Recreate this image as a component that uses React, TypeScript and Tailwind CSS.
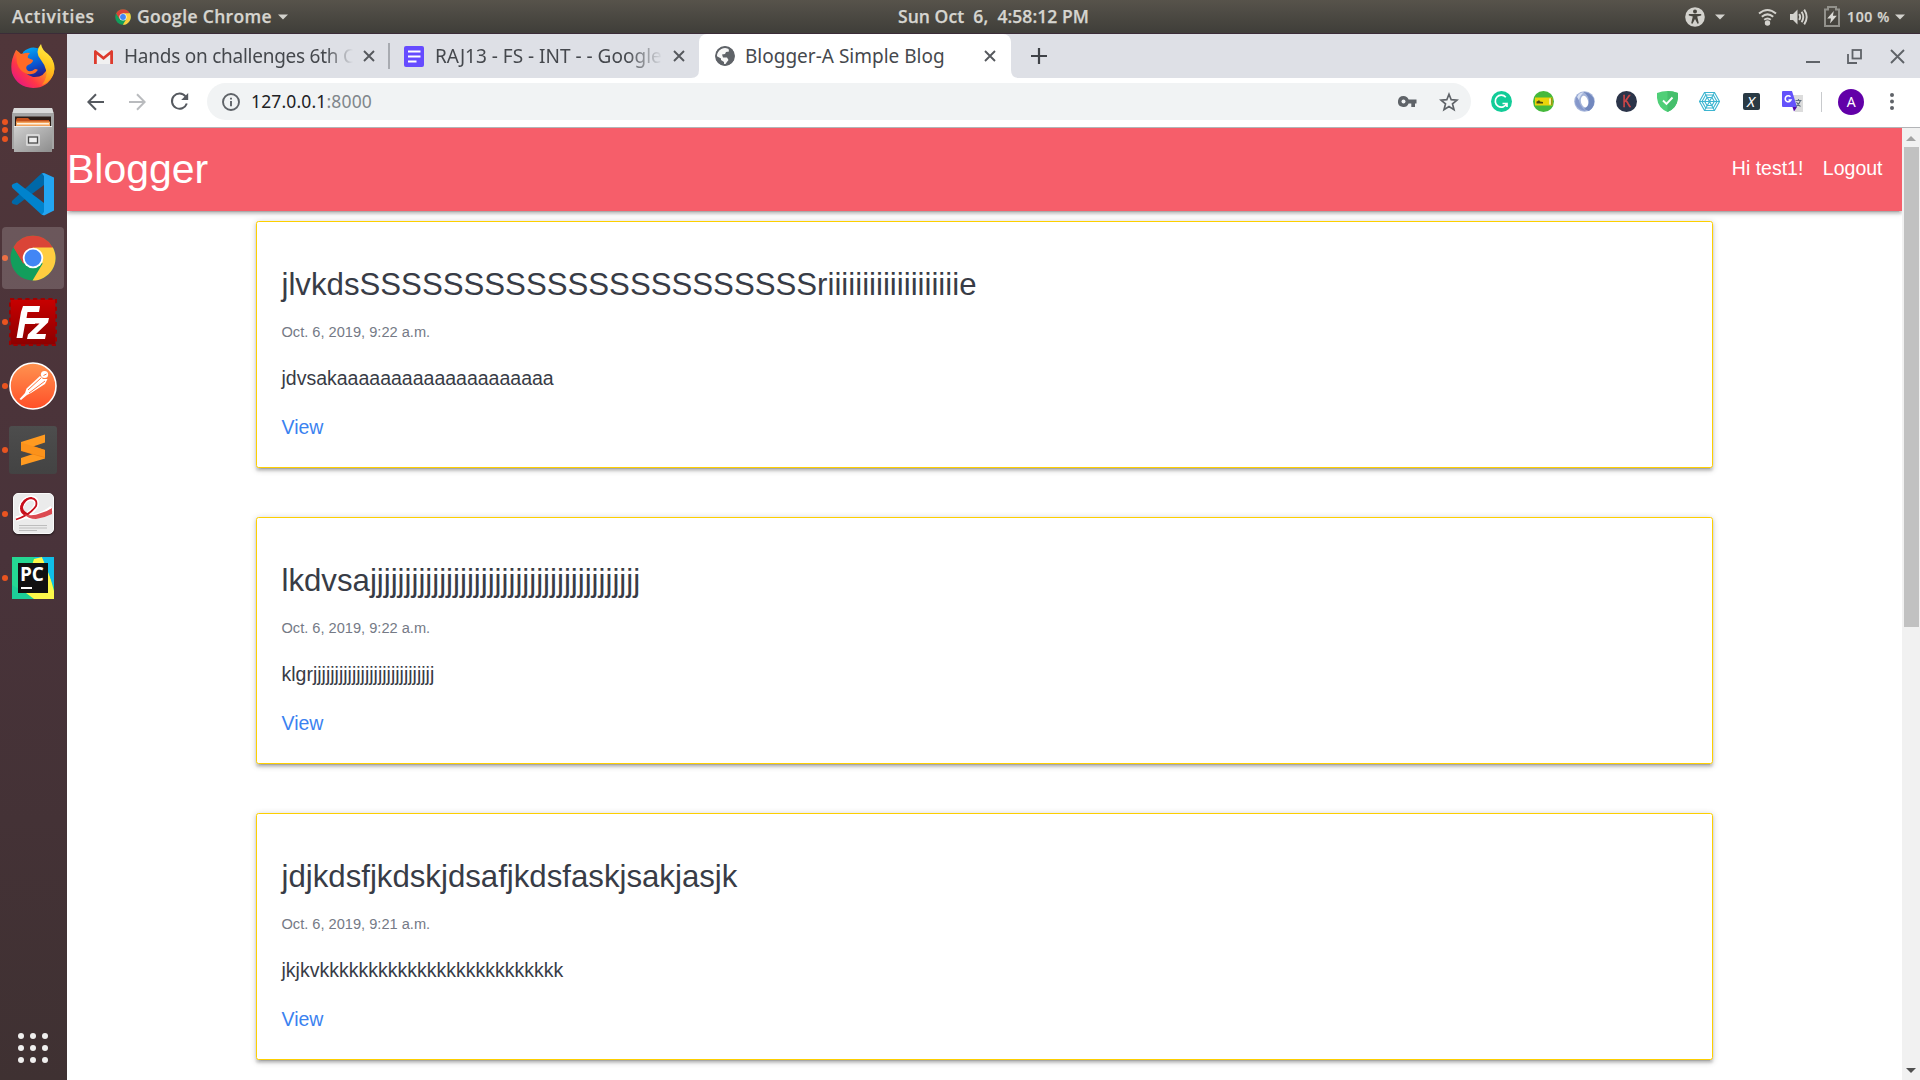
import React from "react";

type Post = { title: string; date: string; body: string };

const posts: Post[] = [
  {
    title: "jlvkds" + "S".repeat(22) + "r" + "i".repeat(19) + "e",
    date: "Oct. 6, 2019, 9:22 a.m.",
    body: "jdvsak" + "a".repeat(20),
  },
  { title: "lkdvsa" + "j".repeat(39), date: "Oct. 6, 2019, 9:22 a.m.", body: "klgr" + "j".repeat(28) },
  { title: "jdjkdsfjkdskjdsafjkdsfaskjsakjasjk", date: "Oct. 6, 2019, 9:21 a.m.", body: "jkjkv" + "k".repeat(25) },
];

function ChromeLogo({ size }: { size: number }) {
  return (
    <svg width={size} height={size} viewBox="0 0 48 48" className="shrink-0">
      <circle cx="24" cy="24" r="23.5" fill="#129e5c" />
      <path d="M3.6 12.4A23.5 23.5 0 0 1 44.4 12.4L44.6 13.5H24L13.8 29.5Z" fill="#da4437" />
      <path d="M24 13H44.8A23.5 23.5 0 0 1 23.5 47.5L34 30Z" fill="#ffcd40" />
      <path d="M3.6 12.4L14 30L20 20Z" fill="#da4437" />
      <circle cx="24" cy="24" r="10.7" fill="#fff" />
      <circle cx="24" cy="24" r="8.8" fill="#4286f5" />
    </svg>
  );
}

function Caret() {
  return (
    <svg width="10" height="6" viewBox="0 0 10 6" className="shrink-0">
      <path d="M0 .5H10L5 5.5Z" fill="#d3d2cd" />
    </svg>
  );
}

function TopBar() {
  return (
    <header className="flex h-[34px] shrink-0 items-center border-b border-[#3b2c38] bg-linear-to-b from-[#57534b] to-[#3f3e39] pl-3 font-['Open_Sans',sans-serif] text-[17.5px] font-semibold text-[#d6d5d0] [-webkit-text-stroke:0.25px_#d6d5d0]">
      <div className="w-[103px] whitespace-nowrap tracking-[0.6px]">Activities</div>
      <ChromeLogo size={16} />
      <div className="ml-[6px] w-[136px] whitespace-nowrap tracking-[0.35px]">Google Chrome</div>
      <span className="ml-[5px]">
        <Caret />
      </span>
      <div className="ml-[610px] w-[192px] whitespace-pre tracking-[0.05px]">Sun Oct  6,  4:58:12 PM</div>
      <div className="ml-auto flex items-center pr-[15px]">
        <svg width="20" height="20" viewBox="0 0 20 20">
          <circle cx="10" cy="10" r="9.8" fill="#d3d2cd" />
          <circle cx="10" cy="4.6" r="2" fill="#48463f" />
          <path d="M3.8 7.1H16.2V8.6L12.2 9.4L13.8 16.3L12.5 16.8L10 12L7.5 16.8L6.2 16.3L7.8 9.4L3.8 8.6Z" fill="#48463f" />
        </svg>
        <span className="ml-[10px]">
          <Caret />
        </span>
        <svg width="19" height="18" viewBox="0 0 19 18" className="ml-[33px]" fill="none" stroke="#d3d2cd" strokeWidth="2">
          <path d="M1 5.6Q9.5-1.6 18 5.6" />
          <path d="M3.8 8.8Q9.5 4 15.2 8.8" />
          <path d="M6.2 11.8Q9.5 9.2 12.8 11.8" />
          <circle cx="9.5" cy="15" r="1.7" fill="#d3d2cd" />
        </svg>
        <svg width="20" height="20" viewBox="0 0 20 20" className="ml-[12px]" fill="none" stroke="#d3d2cd" strokeWidth="1.9">
          <path d="M1 7H4L8.5 2.5V17.5L4 13H1Z" fill="#d3d2cd" stroke="none" />
          <path d="M10.2 7Q12.2 10 10.2 13" />
          <path d="M12.6 4.8Q16 10 12.6 15.2" />
          <path d="M15.2 2.6Q20.2 10 15.2 17.4" />
        </svg>
        <svg width="16" height="21" viewBox="0 0 16 21" className="ml-[15px]">
          <path d="M1 3.5H4V1H12V3.5H15V20H1Z" fill="none" stroke="#92918b" strokeWidth="2" />
          <path d="M9.8 5L3.2 12.5H7L6 17.5L12.8 9.8H8.9Z" fill="#dcdbd6" />
        </svg>
        <div className="ml-[7px] w-[44px] whitespace-nowrap text-[14px] tracking-[0.65px]">100 %</div>
        <span className="ml-[4px]">
          <Caret />
        </span>
      </div>
    </header>
  );
}

function Firefox() {
  return (
    <svg width="46" height="46" viewBox="0 0 46 46">
      <defs>
        <linearGradient id="ff1" x1="1" y1="0.1" x2="0.1" y2="0.9">
          <stop offset="0" stopColor="#ffe83a" />
          <stop offset=".35" stopColor="#ff9a1c" />
          <stop offset=".7" stopColor="#ff3647" />
          <stop offset="1" stopColor="#e31587" />
        </linearGradient>
        <linearGradient id="ff2" x1=".3" y1="0" x2=".6" y2="1">
          <stop offset="0" stopColor="#00a5f5" />
          <stop offset=".6" stopColor="#0a52cf" />
          <stop offset="1" stopColor="#2b1a80" />
        </linearGradient>
        <linearGradient id="ff3" x1=".6" y1="0" x2=".4" y2="1">
          <stop offset="0" stopColor="#fff04a" />
          <stop offset=".5" stopColor="#ffc81e" />
          <stop offset="1" stopColor="#ff8a1c" />
        </linearGradient>
      </defs>
      <path d="M6 7Q9 9 11 11Q17 8 26 9L40 13Q46 22 43.5 31Q38 45 23 45Q7 44 2 30Q-.5 19 6 7Z" fill="url(#ff1)" />
      <path d="M13 9Q22 1 32 7Q38 13 38 24Q34 35 23 34Q12 31 12 20Z" fill="url(#ff2)" />
      <path d="M6 7Q9 10 11 12Q15 9 20 10Q17 13 18 15L23 17Q23 20 18 22Q15 24 17 27Q20 30 25 26Q29 26 27 28Q24 32 17 31Q9 28 7 20Z" fill="#ff6a25" />
      <path d="M31 1Q32 7 38 11Q45 18 44.5 26Q43 38 32 42Q38 34 36 27Q35 22 31 17Q24 9 31 1Z" fill="url(#ff3)" />
    </svg>
  );
}

function Files() {
  return (
    <svg width="44" height="46" viewBox="0 0 44 46">
      <defs>
        <linearGradient id="fl" x1="0" y1="0" x2="1" y2="1">
          <stop offset="0" stopColor="#cfcfcf" />
          <stop offset="1" stopColor="#8d8d8d" />
        </linearGradient>
      </defs>
      <path d="M3 1H41L43 7V42H1V7Z" fill="#a5a5a5" />
      <path d="M3 1H41L42.5 6H1.5Z" fill="#dadada" />
      <rect x="4" y="9.500" width="36" height="12" fill="#2c1d18" />
      <path d="M6 11H17L19 13H38V20H5V13Z" fill="#c4501b" />
      <path d="M5 14.500H39V20H5Z" fill="#f3a35c" />
      <path d="M6 16H38V17.500H6Z" fill="#fff0dd" />
      <path d="M3 19H41V45H3Z" fill="url(#fl)" />
      <path d="M3 19H41V20H3Z" fill="#ececec" />
      <rect x="15" y="27" width="14" height="12" rx="1.500" fill="#d8d8d8" />
      <rect x="17.500" y="30" width="9" height="6" fill="#eee" stroke="#4c4c4c" strokeWidth="1.300" />
    </svg>
  );
}

function VSCode() {
  return (
    <svg width="44" height="44" viewBox="0 0 44 44">
      <path d="M1 29Q0 31 2 32L6 33L33 13V1L31 1L2 28Z" fill="#0068a8" />
      <path d="M1 15Q0 13 2 12L6 10.500L33 31V43L31 43L1.500 16Z" fill="#0083cd" />
      <path d="M33 1L43 5.500V38.500L33 43.500L31 42.500L33 40V4L31 1.500Z" fill="#23a5f2" />
    </svg>
  );
}

function FileZilla() {
  return (
    <svg width="48" height="48" viewBox="0 0 48 48">
      <defs>
        <linearGradient id="fz" x1="0" y1="0" x2="0" y2="1">
          <stop offset="0" stopColor="#c80000" />
          <stop offset="1" stopColor="#8c0000" />
        </linearGradient>
      </defs>
      <rect x="1.500" y="1.500" width="45" height="45" fill="url(#fz)" />
      <rect x="1" y="1" width="46" height="46" fill="none" stroke="#a00000" strokeWidth="2" strokeDasharray="4.200 3.467" />
      <path d="M14 8H31L30 14H18.500L17.500 20H27L26 26H16L13.500 40H7.500L12 14Z" fill="#fff" />
      <path d="M24 20H40L39 24.500L27 36H37L36 41H18L19 36.500L30.500 25.500H23Z" fill="#fff" />
    </svg>
  );
}

function Postman() {
  return (
    <svg width="48" height="48" viewBox="0 0 48 48">
      <defs>
        <linearGradient id="pm" x1="0" y1="0" x2="0" y2="1">
          <stop offset="0" stopColor="#ff9350" />
          <stop offset="1" stopColor="#ff4f28" />
        </linearGradient>
      </defs>
      <circle cx="24" cy="24" r="23" fill="url(#pm)" stroke="#fff" strokeWidth="1.600" />
      <circle cx="35.500" cy="12.500" r="3.600" fill="#fff" />
      <path d="M31 14L34 17L38.500 17L36 22L22 31L18 33L12 38L10.500 37L16 31L17.500 26.500Z" fill="#fff" />
      <path d="M19 28L32 16M20 31L36 19M34.500 13.500L37.500 12" stroke="#ff7540" strokeWidth="1" />
    </svg>
  );
}

function Sublime() {
  return (
    <div className="flex h-12 w-12 items-center justify-center rounded-[3px] bg-linear-to-b from-[#4d4d4d] to-[#434343]">
      <svg width="26" height="32" viewBox="0 0 26 32">
        <path d="M1 24L25 16V24.500L1 31.500Z" fill="#ff9a20" />
        <path d="M1 8L25 16V24L1 17Z" fill="#f08311" />
        <path d="M1 8L25 .500V8.500L1 16.500Z" fill="#ff9a20" />
        <path d="M1 8.500L25 16V23L13 20L1 16.500Z" fill="#fb921b" />
      </svg>
    </div>
  );
}

function Evince() {
  return (
    <div className="mb-[2px] h-[41px] w-[41px] overflow-hidden rounded-[5px] border border-[#fafafa] bg-[#ebebeb] shadow-[0_1px_2px_rgba(0,0,0,0.6)]">
      <svg width="39" height="39" viewBox="0 0 39 39" fill="none">
        <path d="M2 25Q16 22 22 12Q24 5 17 4Q9 5 7 14Q7 22 16 23Q28 22 38 14" stroke="#fff" strokeWidth="5" />
        <path d="M2 25.500Q16 21 22 12Q24 5 17 4Q9 5 7 13" stroke="#c8101c" strokeWidth="1.800" />
        <path d="M18 3Q8 4 6 14Q6 20 12 22L16 20Q9 18 9 13Q11 6 18 4Z" fill="#c8101c" />
        <path d="M10 20Q18 23 27 19Q34 17 38 14V20Q30 24 22 25Q14 25 10 20Z" fill="#dc4a50" />
        <path d="M5 31.500H33M5 34H33M5 36.500H23" stroke="#bdbdbd" strokeWidth="1" />
      </svg>
    </div>
  );
}

function PyCharm() {
  return (
    <div className="relative h-[42px] w-[42px]">
      <svg width="42" height="42" viewBox="0 0 42 42">
        <rect width="42" height="42" fill="#21d789" />
        <path d="M22 0H42V30L30 6Z" fill="#07c3f2" />
        <path d="M22 2L30 0L36 12L42 34V42H18L0 38L12 32Z" fill="#fcf84a" />
        <path d="M0 0H22L6 32L0 30Z" fill="#25d793" />
        <path d="M0 28L14 36L22 42H0Z" fill="#1ccf98" />
        <path d="M30 0H42V30Z" fill="#10bfe8" />
        <rect x="6" y="6" width="30" height="30" fill="#111" />
        <rect x="9" y="30" width="11" height="2" fill="#fff" />
      </svg>
      <span className="absolute left-[8px] top-[6px] font-['Open_Sans',sans-serif] text-[19px] font-bold leading-[22px] tracking-[-0.2px] text-white">PC</span>
    </div>
  );
}

const dock: { name: string; icon: React.ReactNode; dots: number; active?: boolean }[] = [
  { name: "firefox", icon: <Firefox />, dots: 0 },
  { name: "files", icon: <Files />, dots: 3 },
  { name: "code", icon: <VSCode />, dots: 0 },
  { name: "chrome", icon: <ChromeLogo size={46} />, dots: 1, active: true },
  { name: "filezilla", icon: <FileZilla />, dots: 1 },
  { name: "postman", icon: <Postman />, dots: 1 },
  { name: "sublime", icon: <Sublime />, dots: 1 },
  { name: "evince", icon: <Evince />, dots: 1 },
  { name: "pycharm", icon: <PyCharm />, dots: 1 },
];

function Dock() {
  return (
    <aside className="flex w-[67px] shrink-0 flex-col bg-linear-to-b from-[#50363a] via-[#49333a] to-[#3f3132]">
      {dock.map((d) => (
        <div key={d.name} className="flex h-16 items-center">
          <div className="-mr-[6px] ml-[2px] flex w-[6px] flex-col gap-[2.500px]">
            {Array.from({ length: d.dots }, (_, i) => (
              <span key={i} className="h-[6px] w-[6px] rounded-full bg-[#e95420]" />
            ))}
          </div>
          <div
            className={
              d.active
                ? "flex h-[62px] w-[62px] items-center justify-center rounded-[4px] bg-white/17"
                : "flex h-[62px] w-[62px] items-center justify-center"
            }
          >
            {d.icon}
          </div>
        </div>
      ))}
      <div className="mt-auto mb-[17px] ml-[18px] grid w-[30px] grid-cols-3 gap-[6px]">
        {Array.from({ length: 9 }, (_, i) => (
          <span key={i} className="h-[6px] w-[6px] rounded-full bg-[#f0efee]" />
        ))}
      </div>
    </aside>
  );
}

function Close() {
  return (
    <svg width="12" height="12" viewBox="0 0 12 12" className="shrink-0" stroke="#55585d" strokeWidth="1.900">
      <path d="M1 1L11 11M11 1L1 11" />
    </svg>
  );
}

function TabStrip() {
  return (
    <div className="flex h-11 shrink-0 items-center bg-[#dee0e6] font-['Noto_Sans',sans-serif] text-[19px] text-[#45484d]">
      <div className="ml-[27px] flex items-center">
        <svg width="19" height="14" viewBox="0 0 19 14" className="mt-[2px] shrink-0">
          <rect x=".500" y=".500" width="18" height="13.500" rx="1" fill="#f1f1f1" />
          <path d="M0 14V1.500Q0 0 1.500 0L9.500 6.500L17.500 0Q19 0 19 1.500V14H16.200V4.500L9.500 10L2.800 4.500V14Z" fill="#dd3b2d" />
        </svg>
        <div className="ml-[11px] w-[229px] whitespace-nowrap tracking-[-0.25px] [mask-image:linear-gradient(to_right,black_88%,transparent_100%)]">
          Hands on challenges 6th C
        </div>
        <span className="ml-[10px]">
          <Close />
        </span>
      </div>
      <div className="ml-[13px] h-[26px] w-[2px] bg-[#a8abb1]" />
      <div className="ml-[14px] flex items-center">
        <svg width="20" height="21" viewBox="0 0 20 21" className="shrink-0">
          <rect width="20" height="21" rx="2" fill="#664bff" />
          <path d="M4 5.500H16.500M4 10.500H16.500M4 15.500H12.500" stroke="#fff" strokeWidth="2.200" />
        </svg>
        <div className="ml-[11px] w-[228px] whitespace-nowrap [mask-image:linear-gradient(to_right,black_84%,transparent_100%)]">
          RAJ13 - FS - INT - - Google
        </div>
        <span className="ml-[10px]">
          <Close />
        </span>
      </div>
      <div className="ml-[6px] flex h-11 w-[328px] items-end">
        <svg width="8" height="8" viewBox="0 0 8 8" className="shrink-0">
          <path d="M8 0Q8 8 0 8H8Z" fill="#fff" />
        </svg>
        <div className="flex h-11 w-[312px] items-center rounded-t-[8px] bg-white">
          <svg width="20" height="20" viewBox="0 0 20 20" className="ml-[16px] shrink-0">
            <circle cx="10" cy="10" r="9.500" fill="#5f6368" />
            <path d="M9 1.500Q2 4 1.500 10L6 12.500V14L9 16V18.500Q11 18.500 11.500 16.500L13.500 14L12 11.500H8L7 8.500L10 8L11 6L14 5.500L13.500 2.500Z" fill="#fff" opacity=".95" />
            <circle cx="10" cy="10" r="9" fill="none" stroke="#5f6368" strokeWidth="1.800" />
          </svg>
          <div className="ml-[10px] w-[239px] whitespace-nowrap">Blogger-A Simple Blog</div>
          <Close />
        </div>
        <svg width="8" height="8" viewBox="0 0 8 8" className="shrink-0">
          <path d="M0 0Q0 8 8 8H0Z" fill="#fff" />
        </svg>
      </div>
      <svg width="16" height="16" viewBox="0 0 16 16" className="ml-[12px]" stroke="#3f4247" strokeWidth="2.200">
        <path d="M8 0V16M0 8H16" />
      </svg>
      <div className="ml-auto flex items-center pr-[15px]">
        <svg width="14" height="14" viewBox="0 0 14 14" stroke="#5f6368" strokeWidth="2">
          <path d="M0 13H14" />
        </svg>
        <svg width="15" height="15" viewBox="0 0 15 15" className="ml-[27px]" fill="none" stroke="#5f6368" strokeWidth="1.800">
          <rect x="5.500" y="1" width="8.500" height="8.500" />
          <path d="M1 5V14H10" />
        </svg>
        <svg width="15" height="15" viewBox="0 0 15 15" className="ml-[28px]" stroke="#5f6368" strokeWidth="1.900">
          <path d="M1 1L14 14M14 1L1 14" />
        </svg>
      </div>
    </div>
  );
}

function Extensions() {
  return (
    <div className="ml-[20px] flex items-center gap-[20.600px]">
      <svg width="21" height="21" viewBox="0 0 21 21">
        <circle cx="10.500" cy="10.500" r="10.500" fill="#12cc98" />
        <path d="M14.800 6.200A6 6 0 1 0 15.800 12.500H11.500M16 12.500V16" fill="none" stroke="#fff" strokeWidth="1.700" />
      </svg>
      <svg width="21" height="21" viewBox="0 0 21 21">
        <circle cx="10.500" cy="10.500" r="10.500" fill="#45b93c" />
        <rect x="2" y="6.500" width="17.500" height="8" fill="#e9d40b" />
        <path d="M3.500 12.500V10.500L5 10L6 9L7 10.500L10 11V12.500Z" fill="#4b4a10" />
        <path d="M17 7.500V13.500" stroke="#fff" strokeWidth="1.200" />
        <path d="M18.800 7V14" stroke="#7b7b12" strokeWidth="1" />
      </svg>
      <svg width="21" height="21" viewBox="0 0 21 21">
        <circle cx="10.500" cy="10.500" r="10.300" fill="#a5b5da" />
        <path d="M9 1Q16 1 19.500 7Q22 15 15 20L10 18Q17 14 14 6Q12 2 9 1Z" fill="#7288be" />
        <path d="M12 20Q4 19 1.500 13Q.500 8 4 3.500Q4 14 12 20Z" fill="#8597ca" />
        <path d="M3 6Q5 1.500 10 1.200Q6 4 5 9Z" fill="#d7e0f3" />
        <ellipse cx="10.500" cy="10.500" rx="3.600" ry="5.800" transform="rotate(-12 10.500 10.500)" fill="#fff" />
      </svg>
      <div className="flex h-[21px] w-[21px] items-center justify-center rounded-full bg-[#2b3449] font-['Liberation_Sans',sans-serif] text-[17px] leading-none text-[#d34848] [-webkit-text-stroke:0.5px_#d34848]">
        <span className="scale-x-75">K</span>
      </div>
      <svg width="21" height="21" viewBox="0 0 21 21">
        <path d="M10.500 0Q16 0 21 2V7Q20 17 10.500 21Q1 17 0 7V2Q5 0 10.500 0Z" fill="#4fcf77" />
        <path d="M10.500 0Q16 0 21 2V7Q20 17 10.500 21Z" fill="#45bf6c" />
        <path d="M6 9.500L9.500 13L15.500 6.500" fill="none" stroke="#fff" strokeWidth="1.900" />
      </svg>
      <svg width="21" height="21" viewBox="0 0 21 21" fill="none" stroke="#3db5d0" strokeWidth="1.100">
        <path d="M5.500 1.500H15.500L20.500 10.500L15.500 19.500H5.500L.500 10.500Z" />
        <path d="M6.700 4H14.300L18 10.500L14.300 17H6.700L3 10.500Z" />
        <path d="M8 6.500H13L15.300 10.500L13 14.500H8L5.700 10.500Z" />
        <path d="M5.500 1.500L15.500 19.500M15.500 1.500L5.500 19.500M.500 10.500H20.500" />
      </svg>
      <div className="mx-[2px] flex h-[17px] w-[17px] items-center justify-center rounded-[2px] bg-[#2a3a44] font-['Noto_Sans',sans-serif] text-[15px] italic leading-none text-white">
        X
      </div>
      <svg width="21" height="21" viewBox="0 0 21 21">
        <path d="M9 4H21V21H13Z" fill="#dcdcdc" />
        <path d="M0 1Q0 0 1 0H10L15 16H1Q0 16 0 15Z" fill="#6352fb" />
        <path d="M10.500 16H15L12 20.500Z" fill="#5208a8" />
        <path d="M8.500 5.800A3 3 0 1 0 9 9H6.500" fill="none" stroke="#fff" strokeWidth="1.600" />
        <path d="M13.500 9.500H19.500M16.500 8V9.500M18.500 9.500Q17.500 13 14 15.500M14.500 11Q16 14 18.500 15.500" fill="none" stroke="#607080" strokeWidth="1.100" />
      </svg>
    </div>
  );
}

function Toolbar() {
  return (
    <div className="flex h-[50px] shrink-0 items-center border-b border-[#b2b4b7] bg-white pb-[3px] pt-[1px]">
      <svg width="18" height="18" viewBox="0 0 18 18" className="ml-[20px]" fill="none" stroke="#55595f" strokeWidth="2">
        <path d="M17 9H1.500M9 1.200L1.300 9L9 16.800" />
      </svg>
      <svg width="18" height="18" viewBox="0 0 18 18" className="ml-[23px]" fill="none" stroke="#b9bbbe" strokeWidth="2">
        <path d="M1 9H16.500M9 1.200L16.700 9L9 16.800" />
      </svg>
      <svg width="19" height="19" viewBox="0 0 19 19" className="ml-[24px]">
        <path d="M15.600 4.500A7.600 7.600 0 1 0 16.800 11.500" fill="none" stroke="#55595f" strokeWidth="2" />
        <path d="M18.200 1V8H11.200Z" fill="#55595f" />
      </svg>
      <div className="ml-[18px] flex h-[37px] w-[1264px] items-center rounded-full bg-[#f1f3f4] font-['Noto_Sans',sans-serif] text-[17.500px] text-[#202124]">
        <svg width="18" height="18" viewBox="0 0 18 18" className="ml-[15px]" fill="none" stroke="#5f6368" strokeWidth="1.900">
          <circle cx="9" cy="9" r="8" />
          <path d="M9 8V13.200M9 4.800V6.600" />
        </svg>
        <div className="ml-[11px] whitespace-nowrap tracking-[0.15px]">
          127.0.0.1<span className="text-[#80868b]">:8000</span>
        </div>
        <svg width="19" height="12" viewBox="0 0 19 12" className="ml-auto">
          <path d="M5.500 0A5.500 5.500 0 0 1 10.600 3.500H18.500V7.500H17V11H13.300V7.500H10.600A5.500 5.500 0 1 1 5.500 0Z" fill="#5f6368" />
          <circle cx="5.500" cy="5.500" r="2" fill="#f1f3f4" />
        </svg>
        <svg width="20" height="20" viewBox="0 0 20 20" className="ml-[22px] mr-[12px]" fill="none" stroke="#5f6368" strokeWidth="1.700">
          <path d="M10 2.300L12.200 7.700L18 8.100L13.500 11.900L15 17.600L10 14.500L5 17.600L6.500 11.900L2 8.100L7.800 7.700Z" />
        </svg>
      </div>
      <Extensions />
      <div className="ml-[18px] h-5 w-px bg-[#c8cacd]" />
      <div className="ml-[16px] flex h-[26px] w-[26px] items-center justify-center rounded-full bg-[#6200a8] font-['Noto_Sans',sans-serif] text-[14px] leading-none text-white">
        A
      </div>
      <svg width="4" height="17" viewBox="0 0 4 17" className="ml-[26px]" fill="#5f6368">
        <circle cx="2" cy="2" r="2" />
        <circle cx="2" cy="8.500" r="2" />
        <circle cx="2" cy="15" r="2" />
      </svg>
    </div>
  );
}

function PostCard({ post }: { post: Post }) {
  return (
    <article className="h-[247px] shrink-0 rounded-[2.600px] border border-[#fdcf00] bg-white pl-[24.500px] pt-[43px] shadow-[0_2.6px_2.6px_0_rgba(0,0,0,0.14),0_3.9px_1.3px_-2.6px_rgba(0,0,0,0.12),0_1.3px_6.5px_0_rgba(0,0,0,0.2)]">
      <h2 className="text-[31.200px] leading-[40px]">{post.title}</h2>
      <p className="mt-4 text-[14.625px] leading-[22px] text-[#757a86]">{post.date}</p>
      <p className="mt-5 text-[19.500px] leading-[30px]">{post.body}</p>
      <a className="mt-[19px] block text-[19.500px] leading-[30px] text-[#3b82f0]">View</a>
    </article>
  );
}

function Page() {
  return (
    <div className="flex min-h-0 flex-1 bg-white font-['Liberation_Sans',Arial,sans-serif] text-[#383c46]">
      <main className="flex w-[1835px] flex-col overflow-hidden">
        <nav className="flex h-[83px] shrink-0 items-center justify-between bg-[#f65e6a] pr-[19.500px] text-white shadow-[0_2.6px_2.6px_0_rgba(0,0,0,0.14),0_3.9px_1.3px_-2.6px_rgba(0,0,0,0.12),0_1.3px_6.5px_0_rgba(0,0,0,0.2)]">
          <span className="pb-[2px] text-[40.950px] leading-[80px]">Blogger</span>
          <div className="flex gap-[19.500px] pb-[1px] text-[19.500px]">
            <span>Hi test1!</span>
            <span>Logout</span>
          </div>
        </nav>
        <div className="mx-auto mt-[10px] flex w-[1457px] flex-col gap-[49px]">
          {posts.map((p) => (
            <PostCard key={p.title} post={p} />
          ))}
        </div>
      </main>
      <div className="flex w-[18px] flex-col items-center bg-[#f1f1f1]">
        <svg width="10" height="19" viewBox="0 0 10 19" className="shrink-0">
          <path d="M0 13H10L5 8Z" fill="#a3a3a3" />
        </svg>
        <div className="h-[480px] w-[15px] bg-[#c1c1c1]" />
        <svg width="10" height="19" viewBox="0 0 10 19" className="mt-auto shrink-0">
          <path d="M0 7H10L5 12Z" fill="#505050" />
        </svg>
      </div>
    </div>
  );
}

export default function App() {
  return (
    <div className="flex h-[1080px] w-[1920px] flex-col overflow-hidden">
      <TopBar />
      <div className="flex min-h-0 flex-1">
        <Dock />
        <div className="flex w-[1853px] flex-col">
          <TabStrip />
          <Toolbar />
          <Page />
        </div>
      </div>
    </div>
  );
}
